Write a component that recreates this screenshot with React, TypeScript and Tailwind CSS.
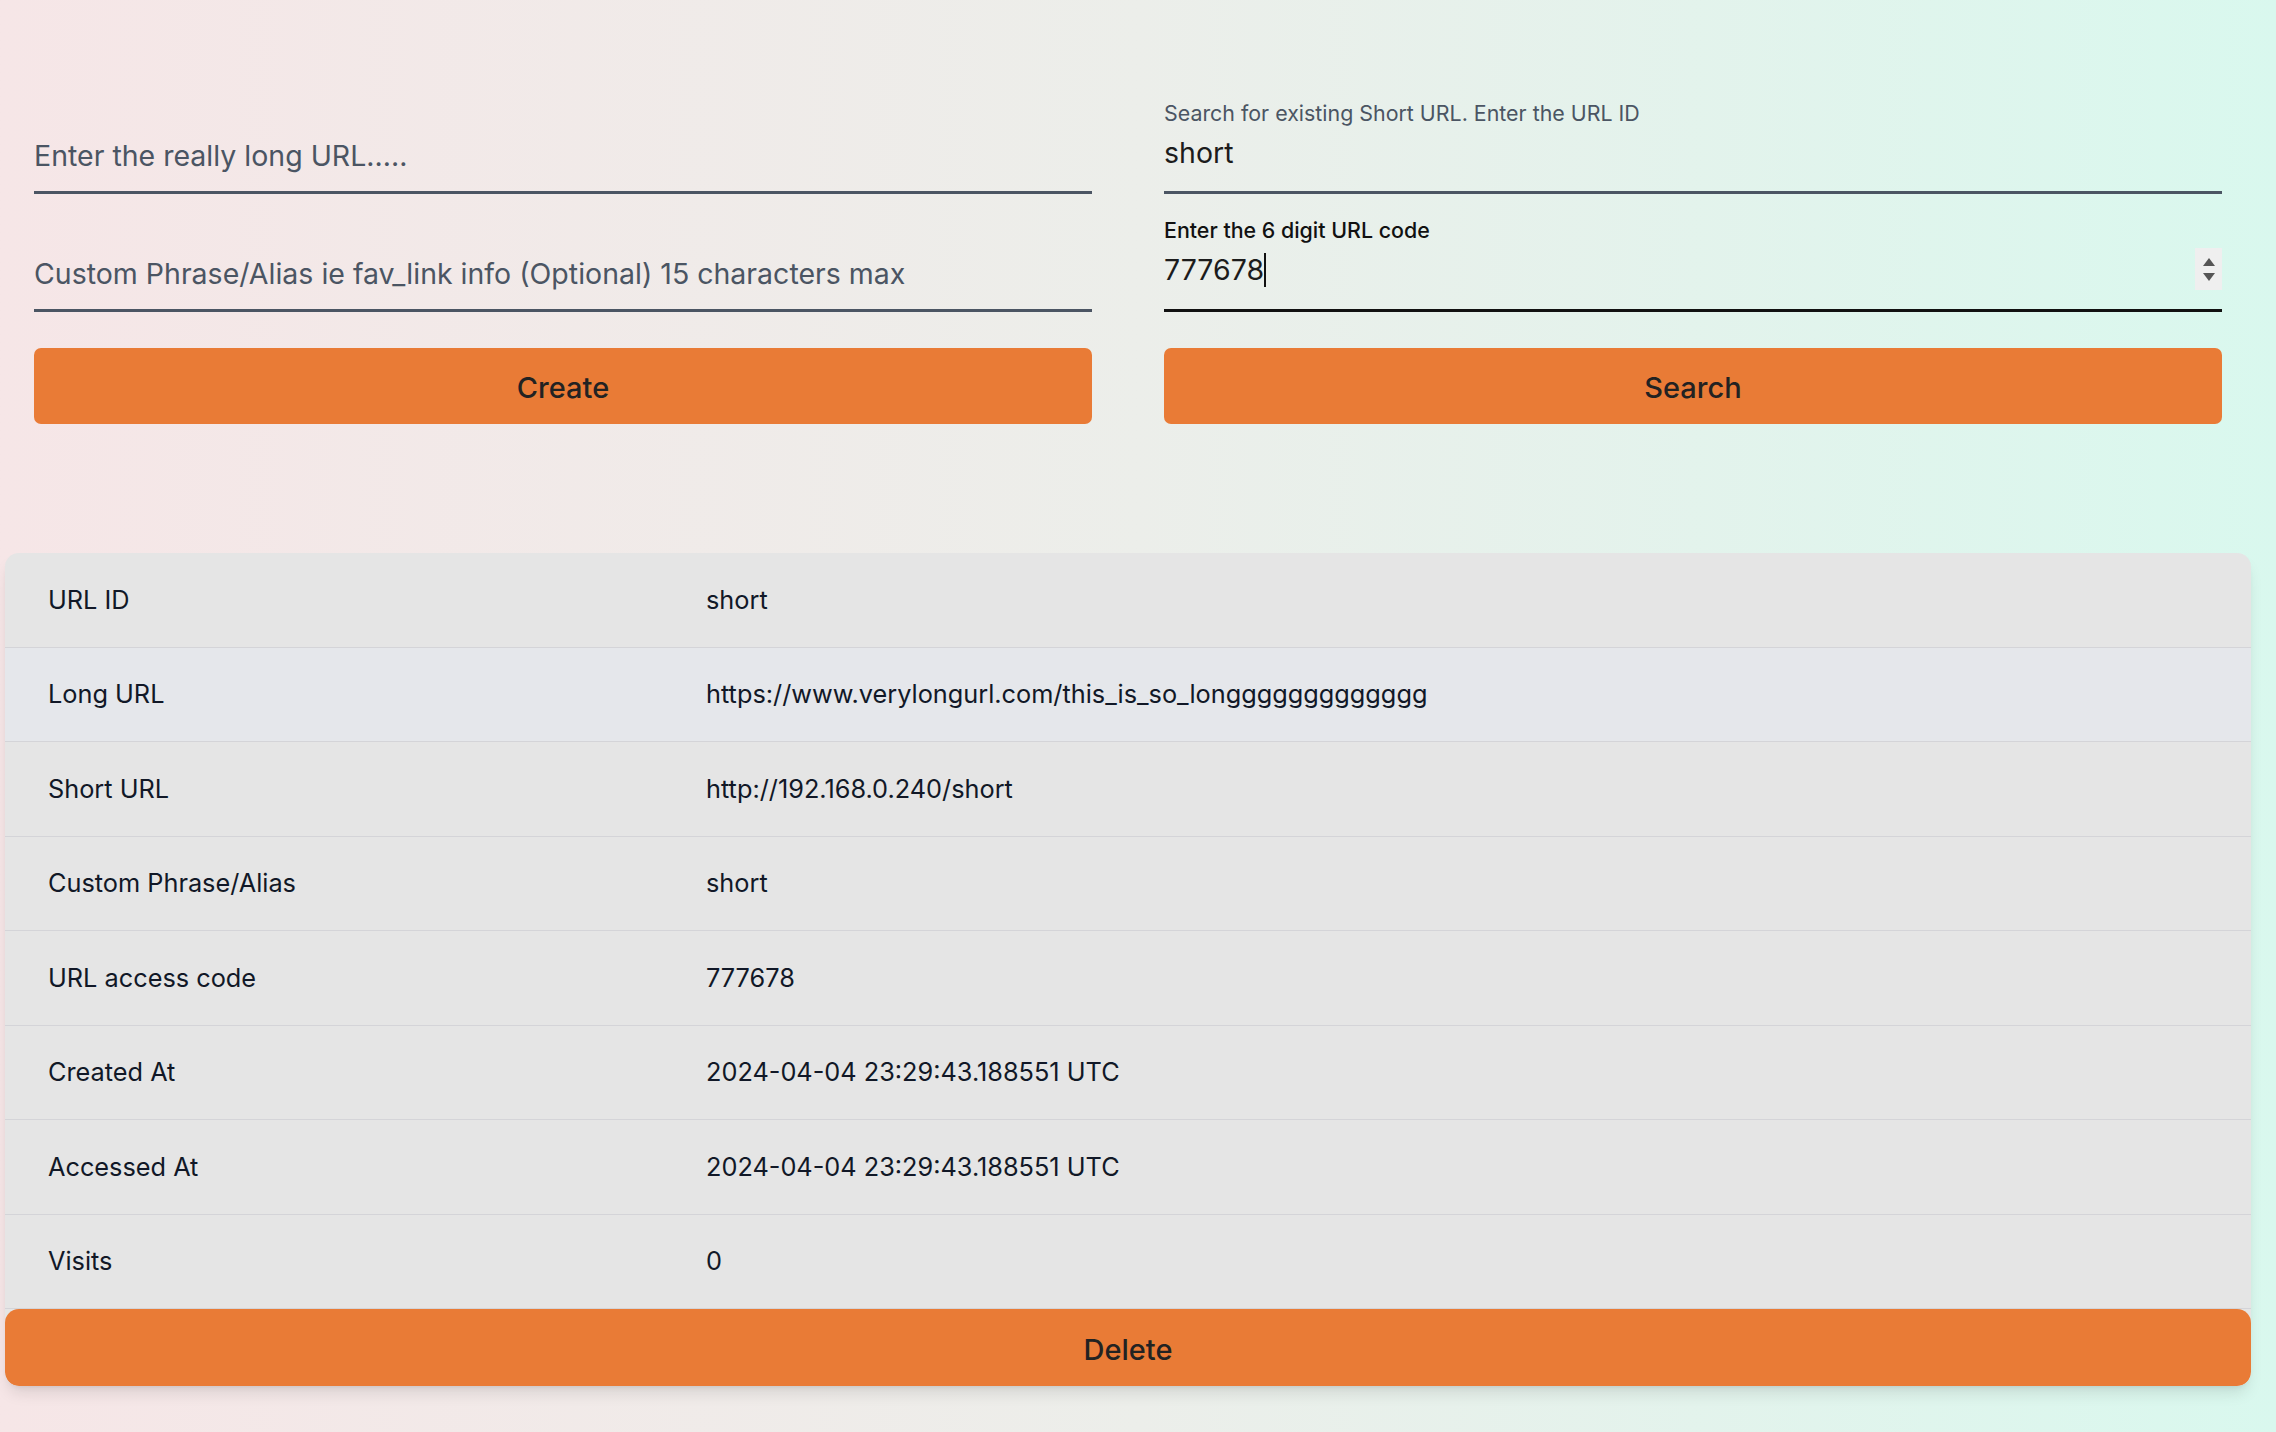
import { useState } from 'react';

const rows = [
  { label: 'URL ID', value: 'short' },
  { label: 'Long URL', value: 'https://www.verylongurl.com/this_is_so_longgggggggggggg' },
  { label: 'Short URL', value: 'http://192.168.0.240/short' },
  { label: 'Custom Phrase/Alias', value: 'short' },
  { label: 'URL access code', value: '777678' },
  { label: 'Created At', value: '2024-04-04 23:29:43.188551 UTC' },
  { label: 'Accessed At', value: '2024-04-04 23:29:43.188551 UTC' },
  { label: 'Visits', value: '0' },
];

function EmptyField({ placeholder }: { placeholder: string }) {
  return (
    <div className="h-[118px] pt-[61px]">
      <input
        type="text"
        placeholder={placeholder}
        className="block w-full h-[57px] pb-[18px] pt-0 bg-transparent border-0 border-b-[3px] border-[#4b5563] text-[28.5px] leading-[36px] text-[#1c1c1c] placeholder:text-[#4b5563] outline-none"
      />
    </div>
  );
}

function Spinner() {
  return (
    <div className="absolute right-0 top-[54px] w-[27px] h-[42px] bg-[#efefef] flex flex-col items-center justify-center gap-[7px]">
      <svg width="12" height="8" viewBox="0 0 12 8"><path d="M6 0L12 8H0z" fill="#555" /></svg>
      <svg width="12" height="8" viewBox="0 0 12 8"><path d="M0 0h12L6 8z" fill="#555" /></svg>
    </div>
  );
}

export default function App() {
  const [urlId, setUrlId] = useState('short');

  return (
    <div className="min-h-screen w-full bg-linear-to-r from-[#f6e6e7] via-[#eceeea] to-[#d9f8ee] font-['Inter','Noto_Sans',sans-serif]">
      {/* Create / search forms */}
      <div className="grid grid-cols-2 gap-x-[72px] pl-[34px] pr-[54px] pt-[76px]">
        <div>
          <EmptyField placeholder="Enter the really long URL....." />
          <EmptyField placeholder="Custom Phrase/Alias ie fav_link info (Optional) 15 characters max" />
          <button className="mt-[36px] w-full h-[76px] pt-[4px] rounded-[7px] bg-[#e97b36] text-[29px] font-medium text-[#222]">
            Create
          </button>
        </div>

        <div>
          <div className="h-[118px] pt-[23px]">
            <label className="block h-[28px] text-[21.4px] leading-[28px] text-[#4b5563]">
              Search for existing Short URL. Enter the URL ID
            </label>
            <input
              type="text"
              value={urlId}
              onChange={(e) => setUrlId(e.target.value)}
              className="mt-[7px] block w-full h-[60px] pb-[21px] pt-0 bg-transparent border-0 border-b-[3px] border-[#4b5563] text-[28.5px] leading-[36px] text-[#1c1c1c] outline-none"
            />
          </div>
          <div className="relative h-[118px] pt-[22px]">
            <label className="block h-[28px] text-[21.4px] leading-[28px] font-medium text-[#111]">
              Enter the 6 digit URL code
            </label>
            <div className="mt-[7px] h-[61px] pb-[20px] border-b-[3px] border-[#111] flex items-center text-[28.5px] leading-[36px] text-[#1c1c1c]">
              <span>777678</span>
              <span className="w-[2px] h-[34px] bg-[#111]" />
            </div>
            <Spinner />
          </div>
          <button className="mt-[36px] w-full h-[76px] pt-[4px] rounded-[7px] bg-[#e97b36] text-[29px] font-medium text-[#222]">
            Search
          </button>
        </div>
      </div>

      {/* Result table */}
      <div className="mt-[129px] ml-[5px] mr-[25px] rounded-[14px] bg-[#e5e5e5] shadow-lg overflow-hidden">
        {rows.map((r, i) => (
          <div
            key={r.label}
            className={`flex items-center h-[94.5px] border-b border-[#d4d4d8] text-[25.3px] text-[#111827] ${i === 1 ? 'bg-[#e5e7eb]' : ''}`}
          >
            <div className="w-[701px] pl-[43px] shrink-0">{r.label}</div>
            <div>{r.value}</div>
          </div>
        ))}
        <button className="block w-full h-[77px] pt-[5px] rounded-[14px] bg-[#e97b36] text-[29px] font-medium text-[#222]">
          Delete
        </button>
      </div>
      <div className="h-[46px]" />
    </div>
  );
}
